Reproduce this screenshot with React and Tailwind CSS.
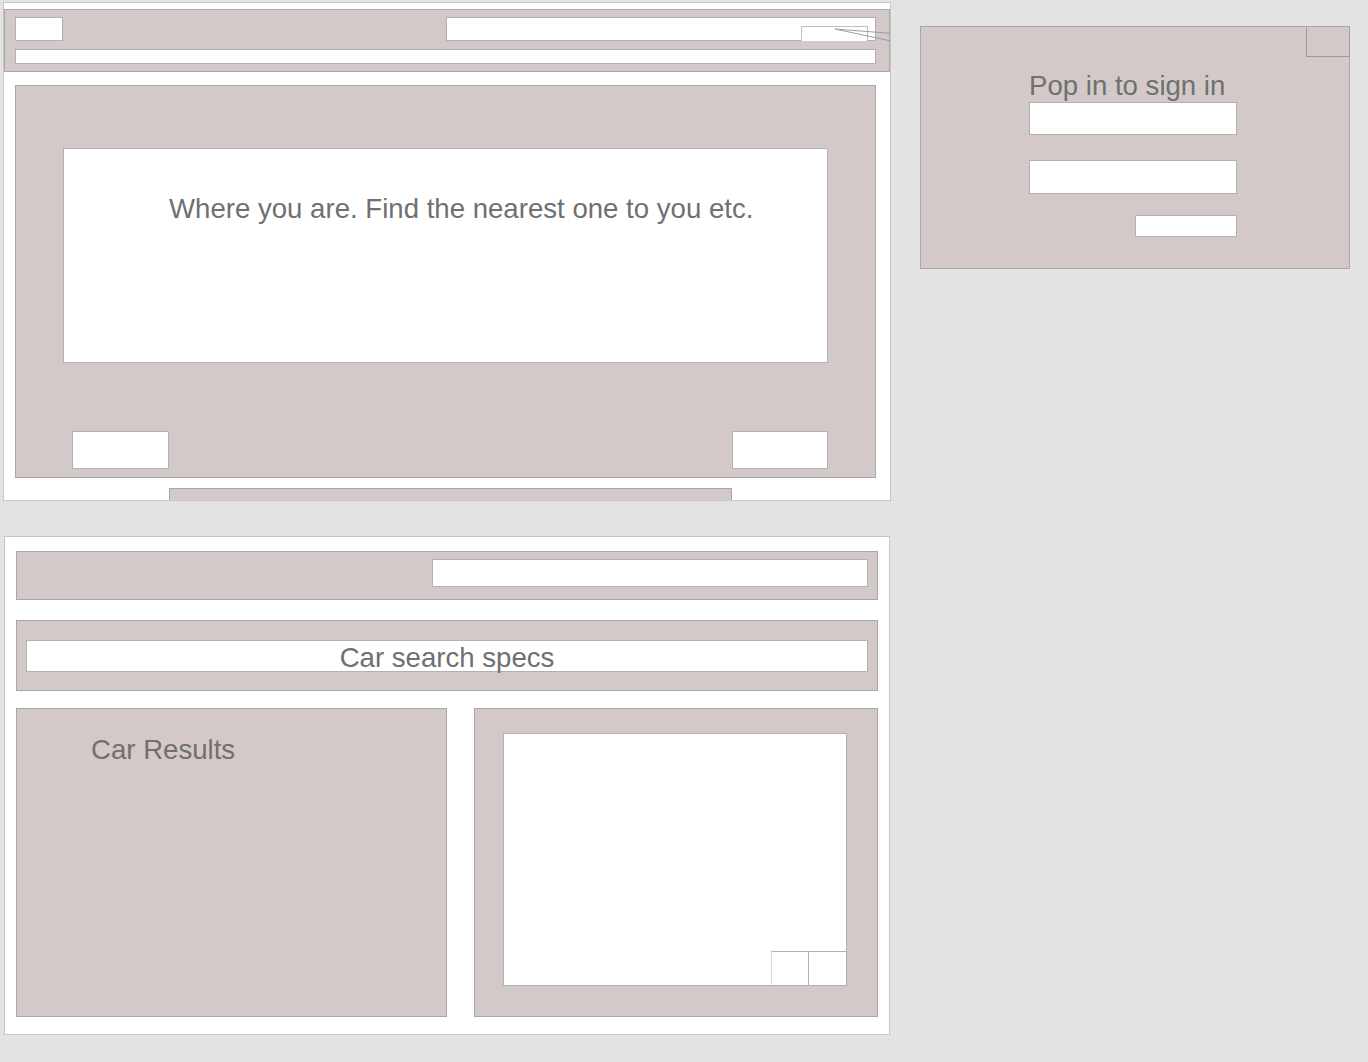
import React from "react";

const taupe = "bg-[#d3c9c8]";

export default function App() {
  return (
    <div className="min-h-screen w-full bg-[#e3e3e3] flex items-start font-['Liberation_Sans',Arial,sans-serif] text-[#707070]">
      {/* Left column of wireframes */}
      <div className="flex flex-col pl-[3px] pt-[2px]">
        {/* Top frame */}
        <div className="relative w-[888px] h-[499px] bg-white border border-[#c6c6c6] overflow-hidden flex flex-col">
          {/* Header */}
          <div className={`shrink-0 mt-[6px] h-[63px] w-full ${taupe} border border-[#aaa6a6] flex flex-col pt-[7px] pl-[10px] pr-[13px] pb-[7px]`}>
            <div className="flex justify-between h-[24px] shrink-0">
              <div className="w-[48px] h-[24px] bg-white border border-[#b3b0b0]" />
              <div className="relative w-[430px] h-[24px] bg-white border border-[#b3b0b0] flex justify-end items-end">
                <div className="mr-[7px] mb-[-1px] w-[67px] h-[15px] border border-b-0 border-[#bdbdbd] bg-white" />
              </div>
            </div>
            <div className="shrink-0 mt-[8px] h-[15px] w-[861px] bg-white border border-[#b3b0b0]" />
          </div>

          {/* Main area */}
          <div className={`shrink-0 ml-[11px] mt-[13px] w-[861px] h-[393px] ${taupe} border border-[#aaa6a6] flex flex-col pt-[62px] px-[47px] pb-[8px]`}>
            <div className="shrink-0 w-[765px] h-[215px] bg-white border border-[#b3b0b0] pl-[105px] pt-[44px]">
              <div className="text-[27.6px] leading-[32px] whitespace-nowrap">Where you are. Find the nearest one to you etc.</div>
            </div>
            <div className="flex-1" />
            <div className="flex justify-between items-end shrink-0">
              <div className="ml-[9px] w-[97px] h-[38px] bg-white border border-[#b3b0b0]" />
              <div className="w-[96px] h-[38px] bg-white border border-[#b3b0b0]" />
            </div>
          </div>

          {/* Bottom tab */}
          <div className={`ml-[165px] mt-[10px] w-[563px] h-[20px] shrink-0 ${taupe} border border-b-0 border-[#aaa6a6]`} />

          {/* connector lines */}
          <svg className="absolute left-[828px] top-[23px]" width="62" height="20" viewBox="0 0 62 20">
            <line x1="3" y1="3" x2="59" y2="7.4" stroke="#9d9d9d" strokeWidth="1" />
            <line x1="3" y1="3" x2="59" y2="15" stroke="#9d9d9d" strokeWidth="1" />
          </svg>
        </div>

        {/* Bottom frame */}
        <div className="ml-[1px] mt-[35px] w-[886px] h-[499px] bg-white border border-[#c6c6c6] flex flex-col pl-[11px] pt-[14px]">
          <div className={`shrink-0 w-[862px] h-[49px] ${taupe} border border-[#aaa6a6] flex justify-end items-start pt-[7px] pr-[9px]`}>
            <div className="w-[436px] h-[28px] bg-white border border-[#b3b0b0]" />
          </div>
          <div className={`shrink-0 mt-[20px] w-[862px] h-[71px] ${taupe} border border-[#aaa6a6] pt-[19px] px-[9px]`}>
            <div className="h-[32px] w-full bg-white border border-[#b3b0b0] flex justify-center pt-[1px]">
              <span className="text-[27.6px] leading-[31px] whitespace-nowrap">Car search specs</span>
            </div>
          </div>
          <div className="shrink-0 mt-[17px] flex gap-[27px] h-[309px]">
            <div className={`w-[431px] h-[309px] ${taupe} border border-[#aaa6a6] pl-[74px] pt-[25px]`}>
              <div className="text-[27.6px] leading-[32px]">Car Results</div>
            </div>
            <div className={`w-[404px] h-[309px] ${taupe} border border-[#aaa6a6] pl-[28px] pt-[24px]`}>
              <div className="w-[344px] h-[253px] bg-white border border-[#b3b0b0] flex justify-end items-end">
                <div className="flex mr-[-1px] mb-[-1px]">
                  <div className="w-[38px] h-[35px] border border-[#b0b0b0] border-l-[#dadada] bg-white" />
                  <div className="w-[38px] h-[35px] border border-l-0 border-[#b0b0b0] bg-white" />
                </div>
              </div>
            </div>
          </div>
        </div>
      </div>

      {/* Sign-in popup */}
      <div className={`ml-[29px] mt-[26px] w-[430px] h-[243px] ${taupe} border border-[#aaa6a6] flex flex-col`}>
        <div className="flex justify-end">
          <div className="mt-[-1px] mr-[-1px] w-[44px] h-[31px] border border-[#9f9b9b] border-t-[#aaa6a6]" />
        </div>
        <div className="pl-[108px] flex flex-col w-[316px]">
          <div className="mt-[13px] text-[27.6px] leading-[31px] whitespace-nowrap">Pop in to sign in</div>
          <div className="mt-[1px] w-[208px] h-[33px] bg-white border border-[#b3b0b0]" />
          <div className="mt-[25px] w-[208px] h-[34px] bg-white border border-[#b3b0b0]" />
          <div className="mt-[21px] ml-[106px] w-[102px] h-[22px] bg-white border border-[#b3b0b0]" />
        </div>
      </div>
    </div>
  );
}
